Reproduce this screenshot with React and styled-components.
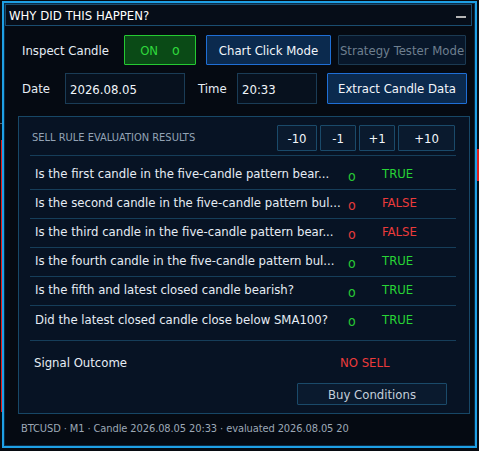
import React from "react";
import styled, { createGlobalStyle } from "styled-components";

const Global = createGlobalStyle`
  html, body { margin: 0; padding: 0; background: #060a10; }
  body { font-family: "DejaVu Sans Condensed", "DejaVu Sans", sans-serif; }
  #root { padding: 1px 0 0 2px; }
`;

const Stage = styled.div`
  position: relative;
  width: 477px;
  height: 450px;
`;

const ChartMark = styled.div`
  position: absolute;
  background: ${(p) => p.$color};
`;

const Window = styled.div`
  position: relative;
  box-sizing: border-box;
  width: 475px;
  height: 447px;
  border: 2px solid #1e9fe4;
  box-shadow: inset 0 0 0 1px #0b2a44;
  background: #050a12;
  display: flex;
  flex-direction: column;
`;

const TitleBar = styled.div`
  box-sizing: border-box;
  height: 22px;
  margin: 1px 3px 0 1px;
  border: 1px solid #1a4d70;
  background: #060d18;
  display: flex;
  align-items: center;
  justify-content: space-between;
  padding: 0 5px 0 3px;
`;

const Title = styled.span`
  color: #ffffff;
  font-size: 13px;
`;

const Minimize = styled.span`
  width: 10px;
  height: 2px;
  margin-top: 3px;
  background: #b4b4b4;
`;

const Controls = styled.div`
  display: flex;
  flex-direction: column;
  gap: 8px;
  padding: 9px 0 0 18px;
`;

const Row = styled.div`
  display: flex;
  align-items: center;
`;

const Label = styled.span`
  width: ${(p) => p.$w}px;
  margin-left: ${(p) => p.$ml || 0}px;
  color: #e6edf5;
  font-size: 13px;
`;

const Button = styled.button`
  box-sizing: border-box;
  width: ${(p) => p.$w}px;
  height: ${(p) => p.$h || 30}px;
  margin-left: ${(p) => p.$ml || 0}px;
  padding: 0;
  font-family: inherit;
  font-size: 13px;
  border: 1px solid;
  border-radius: 1px;
  white-space: nowrap;
  overflow: hidden;
  ${(p) =>
    p.$variant === "on"
      ? `background:#0a4a16;border-color:#25c932;color:#2fd83c;`
      : p.$variant === "primary"
      ? `background:#0b2a4e;border-color:#1f6fd6;color:#f2f6fb;`
      : p.$variant === "disabled"
      ? `background:#08172a;border-color:#1b3a52;color:#6e7f8f;`
      : `background:#0a1a2e;border-color:#1a4a6a;color:#f2f6fb;`}
`;

const OnDot = styled.span`
  margin-left: 14px;
  font-size: 14px;
`;

const Input = styled.div`
  box-sizing: border-box;
  width: ${(p) => p.$w}px;
  height: 31px;
  border: 1px solid #1a3c56;
  background: #07111e;
  color: #f2f6fb;
  font-size: 13px;
  display: flex;
  align-items: center;
  padding: 2px 0 0 4px;
`;

const Panel = styled.div`
  box-sizing: border-box;
  margin: 12px 5px 0 14px;
  height: 298px;
  border: 1px solid #174766;
  background: #071324;
  padding: 8px 13px 0 11px;
  display: flex;
  flex-direction: column;
`;

const PanelHeader = styled.div`
  display: flex;
  align-items: center;
  justify-content: space-between;
  padding: 0 1px 4px 2px;
  border-bottom: 1px solid #163e5a;
`;

const PanelTitle = styled.span`
  color: #93a3b5;
  font-size: 11px;
  margin-top: -2px;
`;

const StepGroup = styled.div`
  display: flex;
  gap: 3px;
`;

const RuleList = styled.div`
  padding: 5px 0;
  border-bottom: 1px solid #163e5a;
`;

const RuleRow = styled.div`
  display: grid;
  grid-template-columns: 313px 34px 1fr;
  align-items: center;
  height: 29px;
  box-sizing: border-box;
  padding-left: 5px;
  padding-bottom: 3px;
  border-bottom: ${(p) => (p.$last ? "none" : "1px solid #163e5a")};
`;

const RuleText = styled.span`
  color: #e6edf5;
  font-size: 13px;
  white-space: nowrap;
  overflow: hidden;
`;

const Marker = styled.span`
  color: ${(p) => (p.$ok ? "#27c834" : "#e23a3a")};
  font-size: 14px;
  margin-top: 4px;
`;

const Verdict = styled.span`
  color: ${(p) => (p.$ok ? "#27d436" : "#ec3b3b")};
  font-size: 13px;
`;

const OutcomeRow = styled.div`
  display: grid;
  grid-template-columns: 306px 1fr;
  align-items: center;
  height: 42px;
  padding-left: 4px;
`;

const OutcomeValue = styled.span`
  color: #ec3b3b;
  font-size: 13px;
`;

const BuyRow = styled.div`
  display: flex;
  justify-content: flex-end;
  padding-right: 9px;
`;

const SecondaryButton = styled(Button)`
  color: #c4cfdb;
`;

const Footer = styled.div`
  padding: 8px 0 0 17px;
  color: #9ca8b6;
  font-size: 11px;
  letter-spacing: -0.1px;
  white-space: nowrap;
`;

const rules = [
  ["Is the first candle in the five-candle pattern bear...", true],
  ["Is the second candle in the five-candle pattern bul...", false],
  ["Is the third candle in the five-candle pattern bear...", false],
  ["Is the fourth candle in the five-candle pattern bul...", true],
  ["Is the fifth and latest closed candle bearish?", true],
  ["Did the latest closed candle close below SMA100?", true],
];

export default function App() {
  return (
    <>
      <Global />
      <Stage>
        <ChartMark $color="#e11b1b" style={{ left: -1, top: 139, width: 1, height: 272 }} />
        <ChartMark $color="#e11b1b" style={{ left: 475, top: 148, width: 3, height: 32 }} />
        <ChartMark $color="#5a6470" style={{ left: -2, top: 122, width: 3, height: 1 }} />
        <Window>
          <TitleBar>
            <Title>WHY DID THIS HAPPEN?</Title>
            <Minimize />
          </TitleBar>
          <Controls>
            <Row>
              <Label $w={102}>Inspect Candle</Label>
              <Button $variant="on" $w={72}>
                ON<OnDot>o</OnDot>
              </Button>
              <Button $variant="primary" $w={125} $ml={10}>
                Chart Click Mode
              </Button>
              <Button $variant="disabled" $w={128} $ml={7}>
                Strategy Tester Mode
              </Button>
            </Row>
            <Row>
              <Label $w={43}>Date</Label>
              <Input $w={120}>2026.08.05</Input>
              <Label $w={39} $ml={13}>Time</Label>
              <Input $w={80}>20:33</Input>
              <Button $variant="primary" $w={140} $h={31} $ml={10}>
                Extract Candle Data
              </Button>
            </Row>
          </Controls>
          <Panel>
            <PanelHeader>
              <PanelTitle>SELL RULE EVALUATION RESULTS</PanelTitle>
              <StepGroup>
                <Button $w={40} $h={26}>-10</Button>
                <Button $w={36} $h={26}>-1</Button>
                <Button $w={36} $h={26}>+1</Button>
                <Button $w={57} $h={26}>+10</Button>
              </StepGroup>
            </PanelHeader>
            <RuleList>
              {rules.map(([text, ok], i) => (
                <RuleRow key={i} $last={i === rules.length - 1}>
                  <RuleText>{text}</RuleText>
                  <Marker $ok={ok}>o</Marker>
                  <Verdict $ok={ok}>{ok ? "TRUE" : "FALSE"}</Verdict>
                </RuleRow>
              ))}
            </RuleList>
            <OutcomeRow>
              <RuleText>Signal Outcome</RuleText>
              <OutcomeValue>NO SELL</OutcomeValue>
            </OutcomeRow>
            <BuyRow>
              <SecondaryButton $w={150} $h={22}>Buy Conditions</SecondaryButton>
            </BuyRow>
          </Panel>
          <Footer>BTCUSD · M1 · Candle 2026.08.05 20:33 · evaluated 2026.08.05 20</Footer>
        </Window>
      </Stage>
    </>
  );
}
